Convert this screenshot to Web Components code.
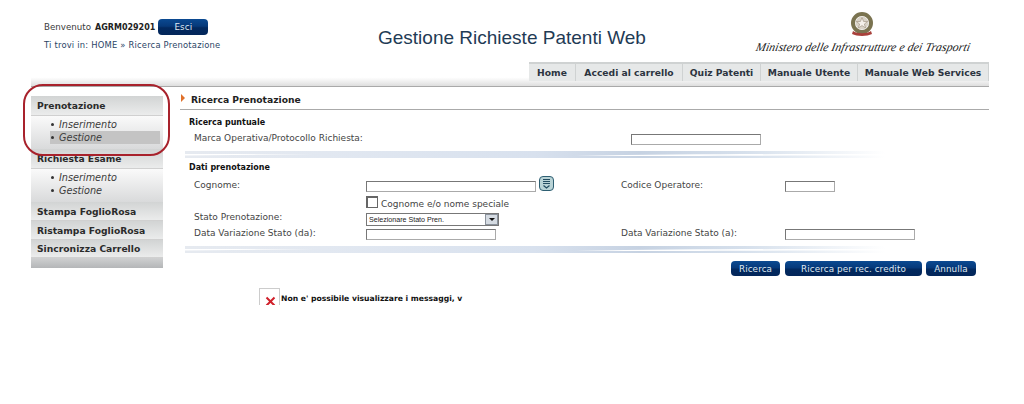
<!DOCTYPE html>
<html lang="it">
<head>
<meta charset="utf-8">
<title>Gestione Richieste Patenti Web</title>
<style>
html, body { margin: 0; background: #fff; }
body { font-family: "DejaVu Sans", Verdana, sans-serif; font-size: 9px; color: #444; }
</style>
</head>
<body>
<app-header></app-header>
<tab-bar>
  <tab-link>Home</tab-link><tab-link w="107">Accedi al carrello</tab-link><tab-link w="78">Quiz Patenti</tab-link><tab-link w="97">Manuale Utente</tab-link><tab-link w="131">Manuale Web Services</tab-link>
</tab-bar>
<page-body></page-body>

<script>
class BlueButton extends HTMLElement {
  constructor() {
    super();
    this.attachShadow({ mode: 'open' });
    var w = this.getAttribute('w') || 50;
    var h = this.getAttribute('h') || 15;
    this.shadowRoot.innerHTML = `
<style>
:host {
  display: inline-flex;
  align-items: center;
  justify-content: center;
  width: ${w}px;
  height: ${h}px;
  border-radius: 4px;
  background: linear-gradient(#0b4a92 0%, #06397a 45%, #02295f 55%, #03265a 100%);
  color: #dfe8f2;
  font-size: 8.800px;
  letter-spacing: 0.1px;
}
</style><slot></slot>`;
  }
}

class AppHeader extends HTMLElement {
  constructor() {
    super();
    this.attachShadow({ mode: 'open' });
    this.shadowRoot.innerHTML = `
<style>
:host { display: grid; grid-template-columns: 378px 378px 1fr; height: 62px; }
.who { padding: 19px 0 0 44px; }
.line { display: flex; align-items: center; height: 16px; color: #3a3a3a; font-size: 8.700px; }
.line b { color: #222; margin: 0 3px 0 4px; font-size: 8px; }
.trail { margin-top: 5px; color: #2a4466; font-size: 8.400px; letter-spacing: 0.2px; }
h1 { margin: 27px 0 0; font: normal 19px "Liberation Sans", Arial, sans-serif; color: #1f3b55; white-space: nowrap; }
.logo { display: flex; flex-direction: column; align-items: center; padding-top: 12px; width: 214px; }
.logo svg { margin-left: -2px; }
.logo span {
  font: italic 12px "Liberation Serif", serif;
  color: #1a1a1a;
  white-space: nowrap;
  margin-top: 3px;
  transform: skewX(-12deg);
}
</style>
<div class="who">
  <div class="line">Benvenuto <b>AGRM029201</b><blue-button h="16">Esci</blue-button></div>
  <div class="trail">Ti trovi in: HOME » Ricerca Prenotazione</div>
</div>
<h1>Gestione Richieste Patenti Web</h1>
<div class="logo">
  <svg width="24" height="25" viewBox="0 0 24 25">
    <circle cx="12" cy="11" r="9" fill="none" stroke="#7a7350" stroke-width="4"/>
    <circle cx="12" cy="11" r="6.500" fill="#d9d3c8"/>
    <path d="M12 5.500l1.600 4h4l-3.200 2.500 1.200 4-3.600-2.400-3.600 2.400 1.200-4L6.400 9.500h4z" fill="#f4f0ea" stroke="#9a8d7a" stroke-width=".6"/>
    <path d="M3 19c4 3 14 3 18 0l1 3c-5 2.500-15 2.500-20 0z" fill="#a8403a"/>
  </svg>
  <span>Ministero delle Infrastrutture e dei Trasporti</span>
</div>`;
  }
}

class TabBar extends HTMLElement {
  constructor() {
    super();
    this.attachShadow({ mode: 'open' });
    this.shadowRoot.innerHTML = `
<style>
:host {
  display: flex;
  justify-content: flex-end;
  margin-left: 31px;
  width: 958px;
  height: 25px;
  box-sizing: border-box;
  padding-bottom: 5px;
  border-bottom: 1px solid #a9a9a9;
  background: linear-gradient(#fff 64%, #dedede 100%);
}
</style><slot></slot>`;
  }
}

class TabLink extends HTMLElement {
  constructor() {
    super();
    this.attachShadow({ mode: 'open' });
    var w = this.getAttribute('w') || 47;
    this.shadowRoot.innerHTML = `
<style>
:host {
  display: flex;
  align-items: center;
  justify-content: center;
  box-sizing: border-box;
  width: ${w}px;
  border-top: 2px solid #cfd2d2;
  border-right: 1px solid #cfd2d2;
  background: #e6e8e8;
  font-weight: bold;
  color: #2c3440;
  font-size: 9.200px;
}
</style><slot></slot>`;
  }
}

class MenuGroup extends HTMLElement {
  constructor() {
    super();
    this.attachShadow({ mode: 'open' });
    var h = this.getAttribute('h') || 19;
    this.shadowRoot.innerHTML = `
<style>
:host { display: block; }
.head {
  display: flex;
  align-items: center;
  box-sizing: border-box;
  height: ${h}px;
  padding-left: 6px;
  font-weight: bold;
  font-size: 9.200px;
  color: #2b2b2b;
  background: linear-gradient(#d2d4d4, #ebecec);
  border-bottom: 1px solid #d0d0d0;
}
.list { background: linear-gradient(#fafafa, #d9dadb); padding: 2px 3px 5px 19px; }
</style>
<div class="head">${this.getAttribute('label')}</div>
<div class="list"><slot></slot></div>`;
    if (!this.children.length) this.shadowRoot.querySelector('.list').style.display = 'none';
  }
}

class MenuItem extends HTMLElement {
  constructor() {
    super();
    this.attachShadow({ mode: 'open' });
    this.shadowRoot.innerHTML = `
<style>
:host { display: block; height: 13px; line-height: 13px; font-size: 9.700px; font-style: italic; color: #3c3c3c; }
:host([selected]) { background: #c4c4c4; }
i { display: inline-block; width: 3px; height: 3px; border-radius: 50%; background: #333; margin: 0 5px 2px 1px; }
</style><i></i><slot></slot>`;
  }
}

class SideMenu extends HTMLElement {
  constructor() {
    super();
    this.attachShadow({ mode: 'open' });
    this.shadowRoot.innerHTML = `
<style>
:host { display: block; position: relative; width: 132px; margin-top: 9px; }
.foot { height: 10px; background: linear-gradient(#cfd0d1, #b4b6b8); }
.ring {
  position: absolute;
  left: -8px;
  top: -12px;
  width: 147px;
  height: 72px;
  box-sizing: border-box;
  border: 2px solid #a8222c;
  border-radius: 20px;
  pointer-events: none;
}
</style>
<menu-group label="Prenotazione" h="20"><menu-item>Inserimento</menu-item><menu-item selected>Gestione</menu-item></menu-group>
<menu-group label="Richiesta Esame" h="20"><menu-item>Inserimento</menu-item><menu-item>Gestione</menu-item></menu-group>
<menu-group label="Stampa FoglioRosa"></menu-group>
<menu-group label="Ristampa FoglioRosa"></menu-group>
<menu-group label="Sincronizza Carrello" h="18"></menu-group>
<div class="foot"></div>
<div class="ring"></div>`;
  }
}

class FormSwoosh extends HTMLElement {
  constructor() {
    super();
    this.attachShadow({ mode: 'open' });
    this.shadowRoot.innerHTML = `
<style>:host { display: block; height: 9px; margin-left: 5px; } svg { display: block; }</style>
<svg width="700" height="9" viewBox="0 0 700 9">
  <defs>
    <linearGradient id="g"><stop offset="0" stop-color="#e6eaf0"/><stop offset=".2" stop-color="#e2e8f1"/><stop offset=".5" stop-color="#d8e1ee"/><stop offset=".65" stop-color="#c6d2e2"/><stop offset=".8" stop-color="#d6e0ec"/><stop offset="1" stop-color="#fff"/></linearGradient>
    <filter id="b" x="-1%" y="-30%" width="102%" height="160%"><feGaussianBlur stdDeviation=".7"/></filter>
  </defs>
  <g filter="url(#b)">
    <rect x="0" y="1" width="700" height="7" fill="url(#g)"/>
    <path d="M0 4H130L0 5.500zM390 6C500 4 600 4 700 4V5.500C600 5.500 500 6 390 6z" fill="#fff"/>
  </g>
</svg>`;
  }
}

class SearchForm extends HTMLElement {
  constructor() {
    super();
    this.attachShadow({ mode: 'open' });
    this.shadowRoot.innerHTML = `
<style>
:host { display: block; width: 809px; margin-top: 5px; }
.title {
  display: flex; align-items: center; gap: 6px;
  height: 18px; box-sizing: border-box;
  font-size: 9.200px; font-weight: bold; color: #222;
  padding: 0 0 2px 1px;
  border-bottom: 1px solid #aaa;
}
.title i { width: 0; height: 0; border-left: 4px solid #e0702a; border-top: 4px solid transparent; border-bottom: 4px solid transparent; margin-top: -3px; }
h3 { margin: 0; padding-left: 9px; font-size: 8px; font-weight: bold; color: #111; line-height: 11px; }
.row {
  display: grid;
  grid-template-columns: 172px 255px 164px 1fr;
  padding-left: 14px;
  align-items: center;
  height: 16px;
}
.one { grid-template-columns: 437px 1fr; margin-top: 2px; }
.one input { width: 130px; }
input[type=text] {
  display: block; box-sizing: border-box; margin: 2px 0 0; padding: 0;
  height: 11px; border: 1px solid #777; border-right-color: #aaa; border-bottom-color: #aaa; background: #fff;
}
.with-icon { display: flex; align-items: flex-start; gap: 3px; }
.with-icon svg { margin-top: -3px; }
.check { display: flex; align-items: flex-start; gap: 3px; height: 15px; }
.box { width: 12px; height: 12px; margin-top: 3px; box-sizing: border-box; border: 1px solid #666; border-width: 2px 1px 1px 2px; }
.check span:last-child { margin-top: 6px; }
.stato { align-items: start; margin-top: 1px; }
.stato > span { margin-top: 3px; }
.sel {
  width: 133px; height: 13px; margin-top: 4px; box-sizing: border-box; border: 1px solid #777;
  font: 7.100px "Liberation Sans", Arial, sans-serif; color: #222;
  display: flex; align-items: center; justify-content: space-between; padding-left: 2px;
}
.sel i { display: flex; width: 13px; height: 11px; box-sizing: border-box; align-items: center; justify-content: center; background: #d5dbe2; border: 1px solid #8a929c; }
.sel i::after { content: ""; border: 3px solid transparent; border-top: 3px solid #111; border-bottom: 0; }
.actions { display: flex; justify-content: flex-end; gap: 5px; padding-right: 13px; margin-top: 7px; }
.actions blue-button:last-child { margin-left: -1px; }
.msg { display: flex; height: 17px; overflow: hidden; margin: 12px 0 0 79px; font-size: 7.650px; font-weight: bold; color: #111; white-space: nowrap; }
.broken { flex: none; width: 21px; height: 30px; box-sizing: border-box; border: 1px solid #ccc; padding: 7px 0 0 5px; margin-right: 1px; }
.txt { padding-top: 6px; }
</style>
<div class="title"><i></i>Ricerca Prenotazione</div>
<h3 style="margin-top:7px">Ricerca puntuale</h3>
<div class="row one"><span>Marca Operativa/Protocollo Richiesta:</span><input type="text"></div>
<form-swoosh style="margin-top:4px"></form-swoosh>
<h3 style="margin-top:3px">Dati prenotazione</h3>
<div class="row" style="margin-top:4px">
  <span>Cognome:</span>
  <div class="with-icon"><input type="text" style="width:170px"><svg width="15" height="15" viewBox="0 0 15 15"><rect x=".5" y=".5" width="14" height="14" rx="3.500" fill="#b9d3d6" stroke="#2e5f72"/><path d="M4 3.500h7M4 5.500h7M4 7.500h7" stroke="#234c60" fill="none"/><path d="M4.500 9.500l3 2.500 3-2.500" stroke="#234c60" stroke-width="1.200" fill="none"/></svg></div>
  <span>Codice Operatore:</span>
  <input type="text" style="width:50px">
</div>
<div class="row" style="height:15px"><span></span><div class="check"><span class="box"></span><span>Cognome e/o nome speciale</span></div></div>
<div class="row stato"><span>Stato Prenotazione:</span><div class="sel">Selezionare Stato Pren.<i></i></div></div>
<div class="row">
  <span>Data Variazione Stato (da):</span><input type="text" style="width:130px">
  <span>Data Variazione Stato (a):</span><input type="text" style="width:130px">
</div>
<form-swoosh style="margin-top:4px"></form-swoosh>
<div class="actions"><blue-button w="49">Ricerca</blue-button><blue-button w="137">Ricerca per rec. credito</blue-button><blue-button w="50">Annulla</blue-button></div>
<div class="msg">
  <div class="broken"><svg width="11" height="11" viewBox="0 0 11 11"><path d="M1.500 1.500l8 8M9.500 1.500l-8 8" stroke="#d0202a" stroke-width="2"/></svg></div>
  <div class="txt">Non e' possibile visualizzare i messaggi, v</div>
</div>`;
  }
}

class PageBody extends HTMLElement {
  constructor() {
    super();
    this.attachShadow({ mode: 'open' });
    this.shadowRoot.innerHTML = `
<style>:host { display: flex; gap: 17px; padding-left: 31px; }</style>
<side-menu></side-menu>
<search-form></search-form>`;
  }
}

customElements.define('blue-button', BlueButton);
customElements.define('app-header', AppHeader);
customElements.define('tab-link', TabLink);
customElements.define('tab-bar', TabBar);
customElements.define('menu-item', MenuItem);
customElements.define('menu-group', MenuGroup);
customElements.define('side-menu', SideMenu);
customElements.define('form-swoosh', FormSwoosh);
customElements.define('search-form', SearchForm);
customElements.define('page-body', PageBody);
</script>
</body>
</html>
